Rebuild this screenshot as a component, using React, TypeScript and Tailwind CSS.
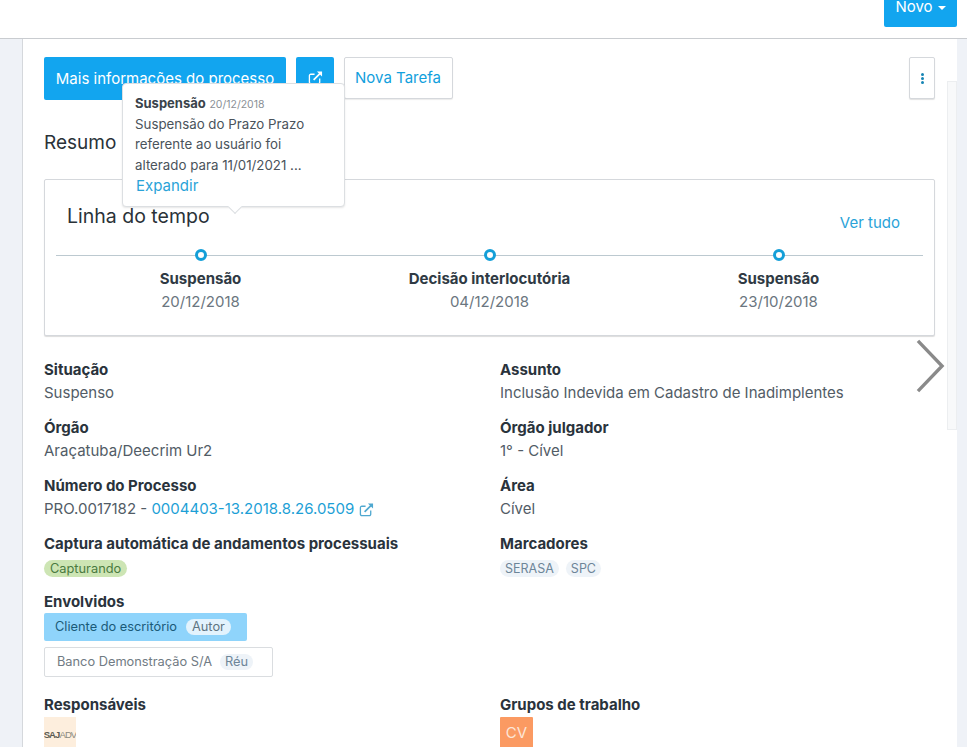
import React from "react";

const Ext = ({ className }: { className: string }) => (
  <svg viewBox="0 0 16 16" fill="none" stroke="currentColor" strokeWidth="1.4" className={className}>
    <path d="M12.5 9v4a1.5 1.5 0 0 1-1.5 1.5H3A1.5 1.5 0 0 1 1.5 13V6A1.5 1.5 0 0 1 3 4.5h4" />
    <path d="M6 10.5 13.5 3" strokeWidth="1.8" />
    <path d="M9.5 1.5H15V7l-2-2-1-1z" fill="currentColor" stroke="none" />
  </svg>
);

const Label = ({ children }: { children: React.ReactNode }) => (
  <div className="text-[15px] leading-[20px] font-bold text-[#2a333c]">{children}</div>
);

const Field = ({ label, children, h }: { label: string; children: React.ReactNode; h: string }) => (
  <div className={h}>
    <Label>{label}</Label>
    <div className="text-[15px] leading-[20px] mt-[3px] text-[#525c66]">{children}</div>
  </div>
);

const Event = ({ t, d }: { t: string; d: string }) => (
  <div className="flex flex-col items-center w-[289px]">
    <div className="w-[12px] h-[12px] rounded-full bg-white border-[3px] border-[#149fd8] mb-[8px] mt-[1px]" />
    <div className="text-[15px] leading-[20px] font-bold text-[#2f3a44]">{t}</div>
    <div className="text-[15px] leading-[20px] mt-[3px] text-[#6b7680]">{d}</div>
  </div>
);

export default function App() {
  return (
    <div className="relative h-[747px] w-[967px] overflow-hidden bg-[#eff2f7] font-['Inter','Liberation_Sans',sans-serif]">
      <header className="flex h-[39px] justify-end overflow-hidden border-b border-[#c9ccd0] bg-white pr-[10px]">
        <button className="-mt-[11px] flex h-[38px] w-[73px] items-center justify-center gap-[5px] rounded-[2px] bg-[#12a5ef] pb-[1px] text-[15px] text-white">
          Novo
          <span className="h-0 w-0 border-x-[4px] border-t-[4px] border-x-transparent border-t-white" />
        </button>
      </header>

      <main className="relative ml-[22px] mr-[10px] h-[708px] border-l border-[#d5d8dc] bg-white pl-[21px] pt-[18px] pr-[22px]">
        <div className="flex items-start h-[43px]">
          <button className="h-[43px] w-[242px] rounded-[2px] bg-[#12a5ef] pt-[2px] text-[15px] text-white">
            Mais informações do processo
          </button>
          <button className="ml-[10px] flex h-[43px] w-[38px] justify-center rounded-[2px] bg-[#12a5ef] pt-[13px] text-white">
            <Ext className="h-[15px] w-[15px]" />
          </button>
          <button className="ml-[10px] h-[42px] w-[109px] rounded-[2px] border border-[#d5d8dc] bg-white pr-[1px] text-[15px] text-[#12a0dd] shadow-[0_1px_1px_rgba(0,0,0,0.08)]">
            Nova Tarefa
          </button>
          <button className="ml-auto flex h-[42px] w-[26px] items-center justify-center rounded-[2px] border border-[#d5d8dc] bg-white shadow-[0_1px_1px_rgba(0,0,0,0.12)]">
            <span className="flex flex-col gap-[1px]">
              <span className="h-[3px] w-[3px] rounded-full bg-[#1685b5]" />
              <span className="h-[3px] w-[3px] rounded-full bg-[#1685b5]" />
              <span className="h-[3px] w-[3px] rounded-full bg-[#1685b5]" />
            </span>
          </button>
        </div>

        <h2 className="mt-[29px] h-[27px] text-[19px] leading-[27px] text-[#2a3238]">Resumo</h2>

        <section className="relative mt-[23px] h-[157px] w-[891px] rounded-[2px] border border-[#d5d8dc] bg-white shadow-[0_1px_1px_rgba(0,0,0,0.14)]">
          <div className="flex items-start justify-between pl-[22px] pr-[34px] pt-[23px]">
            <h3 className="text-[19.5px] leading-[27px] text-[#2a3238]">Linha do tempo</h3>
            <a className="mt-[9px] text-[15px] leading-[21px] text-[#2aa3d8]">Ver tudo</a>
          </div>
          <div className="absolute left-[11px] top-[75px] h-px w-[867px] bg-[#bcc9d0]" />
          <div className="relative mt-[15px] ml-[11px] flex w-[868px]">
            <Event t="Suspensão" d="20/12/2018" />
            <Event t="Decisão interlocutória" d="04/12/2018" />
            <Event t="Suspensão" d="23/10/2018" />
          </div>
        </section>

        <div className="mt-[24px] grid w-[891px] grid-cols-[456px_1fr]">
          <Field h="h-[58px]" label="Situação">Suspenso</Field>
          <Field h="h-[58px]" label="Assunto">Inclusão Indevida em Cadastro de Inadimplentes</Field>
          <Field h="h-[58px]" label="Órgão">Araçatuba/Deecrim Ur2</Field>
          <Field h="h-[58px]" label="Órgão julgador">1° - Cível</Field>
          <Field h="h-[58px]" label="Número do Processo">
            <span className="flex items-center">
              PRO.0017182 -&nbsp;<span className="text-[#1d9fd6]">0004403-13.2018.8.26.0509</span>
              <Ext className="ml-[5px] h-[15px] w-[15px] text-[#4fa8d0]" />
            </span>
          </Field>
          <Field h="h-[58px]" label="Área">Cível</Field>
          <div className="h-[58px]">
            <Label>Captura automática de andamentos processuais</Label>
            <span className="mt-[6px] inline-block h-[17px] rounded-full bg-[#cde5b4] px-[6px] text-[12.8px] leading-[17px] text-[#4a7a40]">Capturando</span>
          </div>
          <div className="h-[58px]">
            <Label>Marcadores</Label>
            <div className="mt-[6px] flex gap-[7px]">
              <span className="h-[17px] rounded-full bg-[#eef3f8] px-[5px] text-[12.5px] leading-[17px] text-[#6d8598]">SERASA</span>
              <span className="h-[17px] rounded-full bg-[#eef3f8] px-[5px] text-[12.5px] leading-[17px] text-[#6d8598]">SPC</span>
            </div>
          </div>
          <div className="col-span-2 h-[103px]">
            <Label>Envolvidos</Label>
            <div className="mt-[1px] flex h-[28px] w-[203px] items-center rounded-[2px] bg-[#8fd4fb] pl-[11px] text-[12.8px] text-[#1a5a78]">
              Cliente do escritório
              <span className="ml-[9px] rounded-full bg-[#e3f3fd] px-[6px] leading-[16px] text-[#5f7582]">Autor</span>
            </div>
            <div className="mt-[6px] flex h-[30px] w-[229px] items-center rounded-[2px] border border-[#dadde0] bg-white pl-[12px] text-[12.8px] text-[#717b84]">
              Banco Demonstração S/A
              <span className="ml-[8px] rounded-full bg-[#eef3f8] px-[5px] leading-[16px] text-[#6d8598]">Réu</span>
            </div>
          </div>
          <div>
            <Label>Responsáveis</Label>
            <div className="mt-[2px] flex h-[32px] w-[32px] items-center justify-center overflow-hidden bg-[#fdeedd] pt-[4px] font-['Liberation_Sans',sans-serif] text-[9.5px] tracking-[-0.9px] text-[#5b5b52]">
              <span className="font-bold">SAJ</span><span className="text-[#8a8a80]">ADV</span>
            </div>
          </div>
          <div>
            <Label>Grupos de trabalho</Label>
            <div className="mt-[2px] flex h-[32px] w-[33px] items-center justify-center rounded-[1px] bg-[#fb9a62] text-[15px] text-[#fde6d8]">CV</div>
          </div>
        </div>

        <div className="absolute right-0 top-[42px] h-[349px] w-[10px] border border-[#eceef0] bg-[#f8f9fa]" />
      </main>

      <div className="absolute left-[122px] top-[83px] h-[124px] w-[223px] rounded-[4px] border border-[#dcdfe2] bg-white pl-[12px] pt-[10px] shadow-[0_1px_2px_rgba(0,0,0,0.1)]">
        <div className="text-[13px] leading-[18px] text-[#3a434b]">
          <span className="font-bold">Suspensão</span> <span className="text-[10.5px] text-[#8a9096]">20/12/2018</span>
        </div>
        <div className="text-[13.3px] leading-[20.4px] text-[#4a535b]">
          Suspensão do Prazo Prazo<br />referente ao usuário foi<br />alterado para 11/01/2021 ...
        </div>
        <a className="ml-[1px] block text-[15px] leading-[21px] text-[#2aa3d8]">Expandir</a>
        <span className="absolute -bottom-[6px] left-[107px] h-[10px] w-[10px] rotate-45 border-b border-r border-[#dcdfe2] bg-white" />
      </div>

      <svg viewBox="0 0 30 56" fill="none" stroke="#8a8a8a" strokeWidth="3.5" className="absolute left-[916px] top-[339px] h-[54px] w-[29px]">
        <path d="M2 2l25 26L2 54" />
      </svg>
    </div>
  );
}
